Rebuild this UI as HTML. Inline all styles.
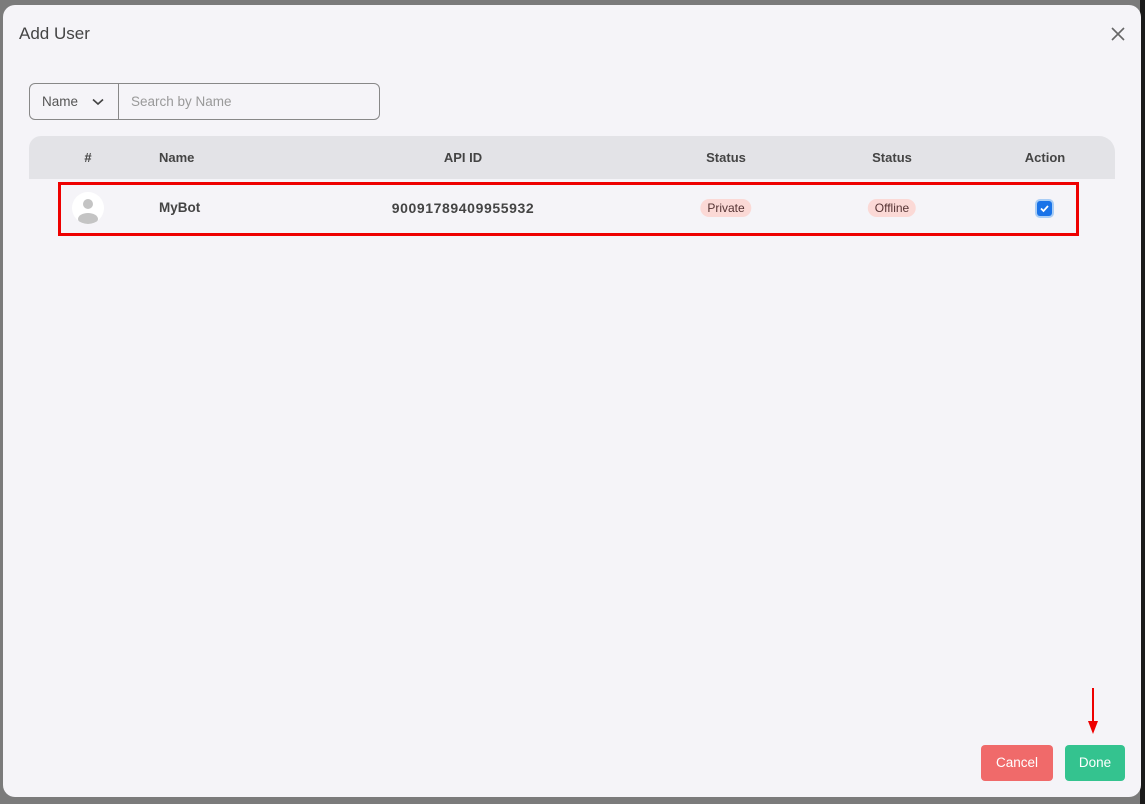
<!DOCTYPE html>
<html><head><meta charset="utf-8"><style>
*{margin:0;padding:0;box-sizing:border-box}
html,body{width:1145px;height:804px;overflow:hidden;background:#1a1a1a;font-family:"Liberation Sans",sans-serif}
.bd{position:absolute;left:0;top:0;width:1140px;height:804px;background:#7b7b7b}
.m{position:absolute;left:3px;top:5px;width:1138px;height:792px;background:#f5f4f8;border-radius:12px}
.t{position:absolute;left:19px;top:24px;font-size:17px;color:#444}
.x{position:absolute;left:1110px;top:26px}
.sel{position:absolute;left:29px;top:83px;width:351px;height:37px;border:1px solid #888;border-radius:6px}
.sel .d{position:absolute;left:0;top:0;width:89px;height:35px;border-right:1px solid #888;font-size:13.5px;color:#555;padding:10px 0 0 12px}
.sel .p{position:absolute;left:101px;top:10px;font-size:13.5px;color:#999}
.hd{position:absolute;left:29px;top:136px;width:1086px;height:43px;background:#e3e3e7;border-radius:12px 16px 0 0}
.h{position:absolute;top:150px;font-size:13px;font-weight:bold;color:#444;transform:translateX(-50%)}
.row{position:absolute;left:58px;top:182px;width:1021px;height:54px;border:3px solid #e00}
.av{position:absolute;left:72px;top:192px;width:32px;height:32px;border-radius:50%;background:#fff;overflow:hidden}
.c{position:absolute;font-size:13.5px;font-weight:bold;color:#444;transform:translateX(-50%)}
.b{position:absolute;top:199px;height:18px;border-radius:9px;background:#fbd9d6;color:#533;font-size:12px;padding:2px 7px;transform:translateX(-50%)}
.cb{position:absolute;left:1037px;top:201px;width:15px;height:15px;border-radius:3px;background:#1a73e8;box-shadow:0 0 0 2px #a9cdf5}
.btn{position:absolute;top:745px;height:36px;border-radius:4px;color:#fff;font-size:13.5px;text-align:center;line-height:36px}
</style></head><body>
<div class="bd"></div>
<div class="m"></div>
<div class="t">Add User</div>
<svg class="x" width="16" height="16" viewBox="0 0 16 16"><path d="M2 2L14 14M14 2L2 14" stroke="#666" stroke-width="1.6"/></svg>
<div class="sel"><div class="d">Name <svg style="position:absolute;left:62px;top:14px" width="12" height="8" viewBox="0 0 12 8"><path d="M1 1.5L6 6L11 1.5" stroke="#444" stroke-width="1.6" fill="none"/></svg></div><div class="p">Search by Name</div></div>
<div class="hd"></div>
<div class="h" style="left:88px">#</div>
<div class="h" style="left:159px;transform:none">Name</div>
<div class="h" style="left:463px">API ID</div>
<div class="h" style="left:726px">Status</div>
<div class="h" style="left:892px">Status</div>
<div class="h" style="left:1045px">Action</div>
<div class="row"></div>
<div class="av"><svg width="32" height="32" viewBox="0 0 32 32"><circle cx="16" cy="12" r="5" fill="#c4c4c4"/><ellipse cx="16" cy="27" rx="10" ry="6" fill="#c4c4c4"/></svg></div>
<div class="c" style="left:159px;top:200px;transform:none">MyBot</div>
<div class="c" style="left:463px;top:200px;font-size:14px;letter-spacing:0.6px">90091789409955932</div>
<div class="b" style="left:726px">Private</div>
<div class="b" style="left:892px">Offline</div>
<div class="cb"><svg width="15" height="15" viewBox="0 0 15 15"><path d="M4 7.5L6.5 10L11 5" stroke="#fff" stroke-width="1.8" fill="none"/></svg></div>
<svg style="position:absolute;left:1087px;top:688px" width="12" height="48" viewBox="0 0 12 48"><path d="M6 0V36" stroke="#e00" stroke-width="2"/><path d="M1 33L6 46L11 33Z" fill="#e00"/></svg>
<div class="btn" style="left:981px;width:72px;background:#f06a6a">Cancel</div>
<div class="btn" style="left:1065px;width:60px;background:#34c38f">Done</div>
</body></html>
